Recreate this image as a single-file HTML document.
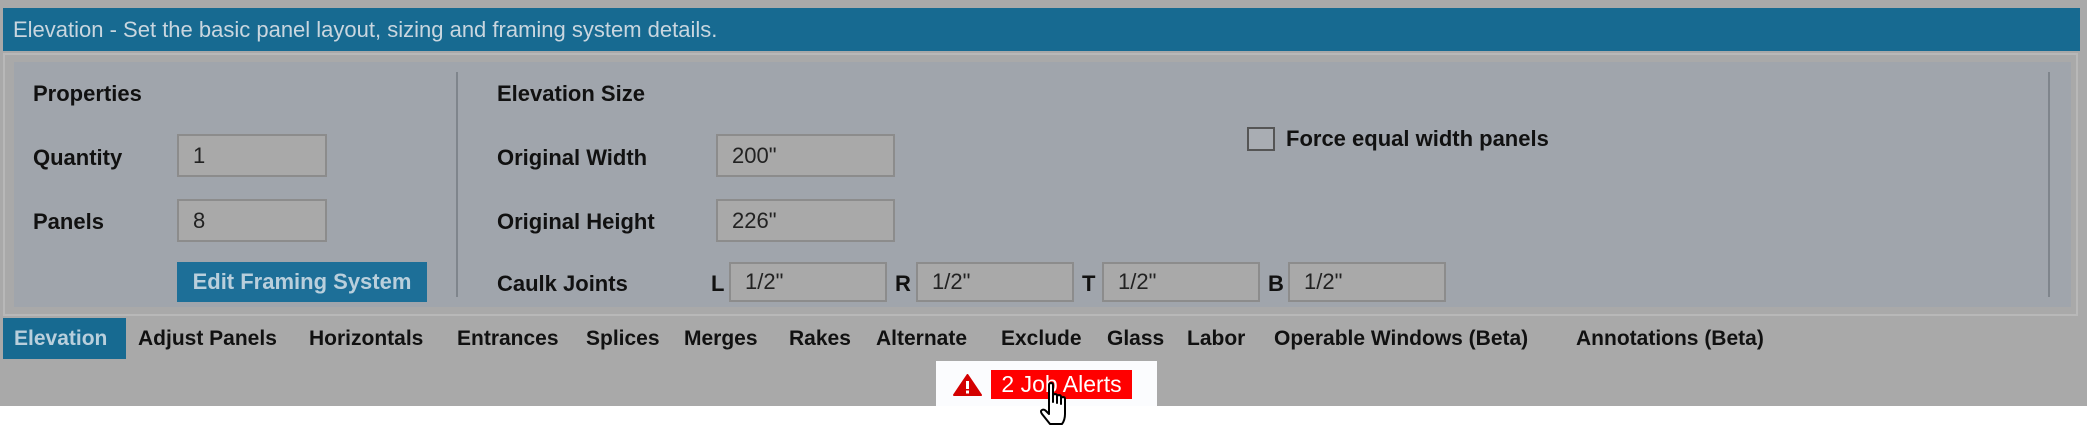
<!DOCTYPE html>
<html><head><style>
body{margin:0;width:2087px;height:430px;background:#fff;position:relative;overflow:hidden;font-family:"Liberation Sans",sans-serif}
.a{position:absolute}
.lbl{position:absolute;font-size:22px;font-weight:bold;color:#111;white-space:nowrap;height:30px;line-height:30px}
.in{position:absolute;background:#a9a9a9;border:2px solid #8c8c8c;box-sizing:border-box;font-size:22px;color:#222;padding-left:14px;display:flex;align-items:center}
.tab{position:absolute;top:318px;height:41px;line-height:41px;font-size:21px;font-weight:bold;color:#111;white-space:nowrap}
</style></head><body>
<div class="a" style="left:0;top:0;width:2087px;height:406px;background:#a9a9a9"></div>
<div class="a" style="left:3px;top:8px;width:2077px;height:43px;background:#176a91"></div>
<div class="a" style="left:13px;top:8px;height:43px;line-height:43px;font-size:22px;color:#c9d6df;white-space:nowrap">Elevation - Set the basic panel layout, sizing and framing system details.</div>
<div class="a" style="left:3px;top:53px;width:2075px;height:263px;border:2px solid #b8b8b8;box-sizing:border-box"></div>
<div class="a" style="left:14px;top:62px;width:2057px;height:245px;background:#a0a5ac"></div>
<div class="a" style="left:456px;top:72px;width:2px;height:225px;background:#7f858c"></div>
<div class="a" style="left:2048px;top:72px;width:2px;height:225px;background:#7f858c"></div>
<div class="lbl" style="left:33px;top:79px">Properties</div>
<div class="lbl" style="left:33px;top:143px">Quantity</div>
<div class="lbl" style="left:33px;top:207px">Panels</div>
<div class="in" style="left:177px;top:134px;width:150px;height:43px">1</div>
<div class="in" style="left:177px;top:199px;width:150px;height:43px">8</div>
<div class="a" style="left:177px;top:262px;width:250px;height:40px;background:#1d6f98;color:#b9cfdc;font-size:22px;font-weight:bold;line-height:40px;text-align:center;white-space:nowrap">Edit Framing System</div>
<div class="lbl" style="left:497px;top:79px">Elevation Size</div>
<div class="lbl" style="left:497px;top:143px">Original Width</div>
<div class="lbl" style="left:497px;top:207px">Original Height</div>
<div class="lbl" style="left:497px;top:269px">Caulk Joints</div>
<div class="in" style="left:716px;top:134px;width:179px;height:43px">200"</div>
<div class="in" style="left:716px;top:199px;width:179px;height:43px">226"</div>
<div class="lbl" style="left:711px;top:269px">L</div>
<div class="in" style="left:729px;top:262px;width:158px;height:40px">1/2"</div>
<div class="lbl" style="left:895px;top:269px">R</div>
<div class="in" style="left:916px;top:262px;width:158px;height:40px">1/2"</div>
<div class="lbl" style="left:1082px;top:269px">T</div>
<div class="in" style="left:1102px;top:262px;width:158px;height:40px">1/2"</div>
<div class="lbl" style="left:1268px;top:269px">B</div>
<div class="in" style="left:1288px;top:262px;width:158px;height:40px">1/2"</div>
<div class="a" style="left:1247px;top:127px;width:28px;height:24px;border:2px solid #555;box-sizing:border-box;background:#a9adb3"></div>
<div class="lbl" style="left:1286px;top:124px">Force equal width panels</div>
<div class="a" style="left:3px;top:318px;width:123px;height:41px;background:#176a91"></div>
<div class="tab" style="left:14px;color:#b9cfdc">Elevation</div>
<div class="tab" style="left:138px">Adjust Panels</div>
<div class="tab" style="left:309px">Horizontals</div>
<div class="tab" style="left:457px">Entrances</div>
<div class="tab" style="left:586px">Splices</div>
<div class="tab" style="left:684px">Merges</div>
<div class="tab" style="left:789px">Rakes</div>
<div class="tab" style="left:876px">Alternate</div>
<div class="tab" style="left:1001px">Exclude</div>
<div class="tab" style="left:1107px">Glass</div>
<div class="tab" style="left:1187px">Labor</div>
<div class="tab" style="left:1274px">Operable Windows (Beta)</div>
<div class="tab" style="left:1576px">Annotations (Beta)</div>
<div class="a" style="left:936px;top:361px;width:221px;height:45px;background:#fbfcfe"></div>
<svg class="a" style="left:953px;top:374px" width="29" height="22" viewBox="0 0 29 22"><path d="M14.5 1 L28 21 L1 21 Z" fill="#d40000" stroke="#d40000" stroke-linejoin="round" stroke-width="2"/><rect x="13" y="7" width="3" height="8" fill="#fff"/><rect x="13" y="16.5" width="3" height="3" fill="#fff"/></svg>
<div class="a" style="left:991px;top:370px;width:141px;height:29px;background:#ff0000;color:#fff;font-size:23px;line-height:29px;text-align:center;white-space:nowrap;overflow:hidden">2 Job Alerts</div>
<svg class="a" style="left:1040px;top:382px" width="36" height="46" viewBox="0 0 36 46"><path d="M9 3 Q9 1 11 1 Q13 1 13 3 L13 20 L13 14 Q13 12 15 12 Q17 12 17 14 L17 21 L17 15 Q17 13 19 13 Q21 13 21 15 L21 22 L21 17 Q21 15 23 15 Q25 15 25 17 L25 32 Q25 38 22 42 L10 42 L2 32 Q0 29 2 28 Q4 27 6 29 L9 32 Z" fill="#fff" stroke="#000" stroke-width="2" stroke-linejoin="round"/></svg>
</body></html>
